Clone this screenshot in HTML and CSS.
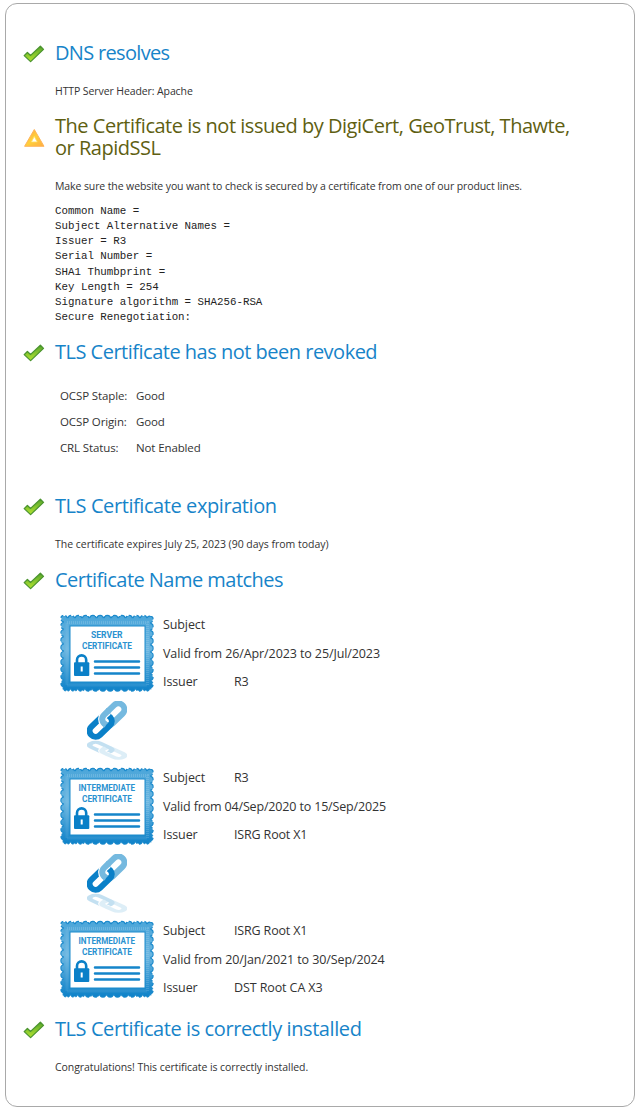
FILE: index.html
```
<!DOCTYPE html>
<html lang="en">
<head>
<meta charset="utf-8">
<title>Certificate check</title>
<link rel="stylesheet" href="styles.css">
</head>
<body>
<svg class="defs" width="0" height="0" aria-hidden="true">
  <defs>
    <linearGradient id="green" x1="0" y1="0" x2="0" y2="1"><stop offset="0" stop-color="#55a52c"/><stop offset="1" stop-color="#b5e52f"/></linearGradient>
    <linearGradient id="amber" x1="0" y1="0" x2="1" y2="1"><stop offset="0" stop-color="#ff9d45"/><stop offset=".5" stop-color="#ffd03a"/><stop offset="1" stop-color="#ffac42"/></linearGradient>
    <linearGradient id="blue" gradientUnits="userSpaceOnUse" x1="0" y1="0" x2="0" y2="78"><stop offset="0" stop-color="#4aa5d9"/><stop offset=".45" stop-color="#6bb6e0"/><stop offset="1" stop-color="#0b80c8"/></linearGradient>
    <symbol id="check" viewBox="0 0 22 18"><path d="M1.2 10.6 4.4 7.5 7.6 10.4 17.4 1.2 20.5 4.4 7.6 16.6Z" fill="url(#green)" stroke="#4b942f" stroke-width="1.3" stroke-linejoin="round"/></symbol>
    <symbol id="warn" viewBox="0 0 22 18"><path d="M11.3.5 21 17.3H1.6Z" fill="url(#amber)" stroke="#ffb45a" stroke-width="1" stroke-linejoin="round"/><path d="M11.3 7.4 14.2 12.900H8.400Z" fill="#fff" stroke="#ffe06a" stroke-width=".8"/></symbol>
    <symbol id="frame" viewBox="0 0 94 78">
      <rect x="4" y="4.5" width="86" height="69.5" fill="none" stroke="#1c8acc" stroke-width="7.400" stroke-linecap="round" stroke-dasharray="0 7.233"/>
      <rect x="2.600" y="3.100" width="88.800" height="72.300" fill="#1c8acc"/>
      <rect x="4" y="4.5" width="86" height="69.5" fill="none" stroke="url(#blue)" stroke-width="5.200" stroke-linecap="round" stroke-dasharray="0 7.233"/>
      <rect x="3.700" y="4.200" width="86.600" height="70.100" fill="url(#blue)"/>
      <g fill="none" stroke="#fff" stroke-width="2.400" stroke-linecap="round" stroke-dasharray="0 7.233"><rect x=".4" y=".9" width="93.200" height="76.700" pathLength="311" stroke-dashoffset="-3.600"/></g>
      <rect x="7" y="8.500" width="80.500" height="62.500" fill="none" stroke="#fff" stroke-opacity=".14" stroke-width="3" stroke-dasharray="1 1"/>
      <rect x="10" y="12" width="75" height="56" fill="#fff" stroke="#1b8acb" stroke-width="1"/>
      <path d="M17 49V46a4.600 4.600 0 0 1 9.200 0V49" fill="none" stroke="#0a80c8" stroke-width="2.600"/>
      <rect x="14" y="48.300" width="15.300" height="13.700" rx="1" fill="#0a80c8"/>
      <rect x="20.700" y="52.500" width="2" height="5" fill="#fff"/>
      <path d="M35 47.600H79M35 53.600H79M35 59.600H79" stroke="#1585ca" stroke-width="2.500" stroke-linecap="round"/>
    </symbol>
    <g id="links" fill="none">
      <rect x="-13" y="-6" width="26" height="12" rx="6" transform="translate(26.300 13.300) rotate(-44)" stroke="#75b9df" stroke-width="6"/>
      <path d="M-6 -6H7A6 6 0 0 1 13 0V1" transform="translate(13.700 25) rotate(-44)" stroke="#fff" stroke-width="8.400"/>
      <rect x="-13" y="-6" width="26" height="12" rx="6" transform="translate(13.700 25) rotate(-44)" stroke="#0a80c8" stroke-width="6"/>
      <path d="M-2 -6H-7A6 6 0 0 0 -13 0" transform="translate(26.300 13.300) rotate(-44)" stroke="#fff" stroke-width="8.400"/>
      <path d="M0 -6H-7A6 6 0 0 0 -12.500 2.400" transform="translate(26.300 13.300) rotate(-44)" stroke="#75b9df" stroke-width="6"/>
    </g>
    <symbol id="chain" viewBox="0 0 40 60"><use href="#links"/><g opacity=".24" transform="translate(0 58.500) scale(1 -.48)"><use href="#links"/></g></symbol>
  </defs>
</svg>
<main class="panel">
  <section class="check">
    <h2 class="title t-dns"><svg class="icon"><use href="#check"/></svg><span>DNS resolves</span></h2>
    <p class="note n-http">HTTP Server Header: Apache</p>
  </section>
  <section class="check">
    <h2 class="title warning"><svg class="icon"><use href="#warn"/></svg><span>The Certificate is not issued by DigiCert, GeoTrust, Thawte, or RapidSSL</span></h2>
    <p class="note n-make">Make sure the website you want to check is secured by a certificate from one of our product lines.</p>
    <pre class="details">Common Name =
Subject Alternative Names =
Issuer = R3
Serial Number =
SHA1 Thumbprint =
Key Length = 254
Signature algorithm = SHA256-RSA
Secure Renegotiation:</pre>
  </section>
  <section class="check">
    <h2 class="title"><svg class="icon"><use href="#check"/></svg><span>TLS Certificate has not been revoked</span></h2>
    <dl class="status">
      <dt>OCSP Staple:</dt><dd>Good</dd>
      <dt>OCSP Origin:</dt><dd>Good</dd>
      <dt>CRL Status:</dt><dd>Not Enabled</dd>
    </dl>
  </section>
  <section class="check">
    <h2 class="title t-expire"><svg class="icon"><use href="#check"/></svg><span>TLS Certificate expiration</span></h2>
    <p class="note n-expire">The certificate expires July 25, 2023 (90 days from today)</p>
  </section>
  <section class="check">
    <h2 class="title t-name"><svg class="icon"><use href="#check"/></svg><span>Certificate Name matches</span></h2>
    <div class="certs">
      <div class="cert">
        <svg class="stamp" viewBox="0 0 94 78"><use href="#frame"/><text x="31" y="24.300" textLength="31.500" lengthAdjust="spacingAndGlyphs">SERVER</text><text x="22" y="35" textLength="50" lengthAdjust="spacingAndGlyphs">CERTIFICATE</text></svg>
        <div class="info"><div class="row"><span>Subject</span></div><div class="row"><span>Valid from 26/Apr/2023 to 25/Jul/2023</span></div><div class="row"><span class="key">Issuer</span><span>R3</span></div></div>
      </div>
      <svg class="chain"><use href="#chain"/></svg>
      <div class="cert">
        <svg class="stamp" viewBox="0 0 94 78"><use href="#frame"/><text x="18.500" y="24.300" textLength="56.500" lengthAdjust="spacingAndGlyphs">INTERMEDIATE</text><text x="22" y="35" textLength="50" lengthAdjust="spacingAndGlyphs">CERTIFICATE</text></svg>
        <div class="info"><div class="row"><span class="key">Subject</span><span>R3</span></div><div class="row tight"><span>Valid from 04/Sep/2020 to 15/Sep/2025</span></div><div class="row"><span class="key">Issuer</span><span class="tight">ISRG Root X1</span></div></div>
      </div>
      <svg class="chain"><use href="#chain"/></svg>
      <div class="cert">
        <svg class="stamp" viewBox="0 0 94 78"><use href="#frame"/><text x="18.500" y="24.300" textLength="56.500" lengthAdjust="spacingAndGlyphs">INTERMEDIATE</text><text x="22" y="35" textLength="50" lengthAdjust="spacingAndGlyphs">CERTIFICATE</text></svg>
        <div class="info"><div class="row"><span class="key">Subject</span><span class="tight">ISRG Root X1</span></div><div class="row"><span>Valid from 20/Jan/2021 to 30/Sep/2024</span></div><div class="row"><span class="key">Issuer</span><span>DST Root CA X3</span></div></div>
      </div>
    </div>
  </section>
  <section class="check">
    <h2 class="title t-installed"><svg class="icon"><use href="#check"/></svg><span>TLS Certificate is correctly installed</span></h2>
    <p class="note">Congratulations! This certificate is correctly installed.</p>
  </section>
</main>
</body>
</html>
```
FILE: styles.css
```
* { box-sizing: border-box; }
body { margin: 0; background: #fff; color: #333; font-family: "Open Sans", "Noto Sans", sans-serif; }
.defs { position: absolute; }
.panel { width: 630px; height: 1104px; margin: 3px 0 0 5px; padding: 38px 17px 0; border: 1.500px solid #a9a9a9; border-radius: 12px; }
.check { padding-left: 32px; }
.title { display: flex; align-items: center; margin: 0 0 19px -32px; font-size: 20px; line-height: 22px; font-weight: 400; letter-spacing: -.5px; color: #1784c9; }
.t-dns { letter-spacing: -.67px; }
.t-expire, .t-installed { letter-spacing: -.42px; }
.t-name { letter-spacing: -.53px; }
.warning { color: #5f5f12; letter-spacing: -.48px; }
.warning span { width: 530px; }
.icon { width: 22px; height: 18px; flex: none; margin: 1px 10px 0 0; }
.note { margin: 0 0 16px; font-size: 10.500px; line-height: 16px; letter-spacing: -.065px; white-space: nowrap; }
.n-http { letter-spacing: -.1px; }
.n-make { margin-bottom: 10px; letter-spacing: -.105px; }
.n-expire { margin-bottom: 17px; letter-spacing: -.02px; }
.details { margin: 0 0 16px; font: 10.810px/15.120px "Liberation Mono", monospace; color: #222; }
.status { display: grid; grid-template-columns: 76px auto; margin: 20px 0 34px 5px; font-size: 11.500px; line-height: 26px; letter-spacing: -.12px; }
.status dd { margin: 0; }
.certs { margin: 23px 0 20px 5px; }
.cert { display: flex; height: 78px; gap: 9px; }
.stamp { width: 94px; height: 78px; flex: none; font: 700 9.800px Roboto, sans-serif; fill: #2a92d0; }
.chain { display: block; width: 40px; height: 60px; margin: 9px 0 6px 27px; }
.info { margin-top: -3px; font-size: 12.500px; line-height: 28.500px; letter-spacing: -.1px; white-space: nowrap; }
.row { display: flex; height: 28.500px; }
.tight { letter-spacing: -.16px; }
.key { width: 71px; }
```
